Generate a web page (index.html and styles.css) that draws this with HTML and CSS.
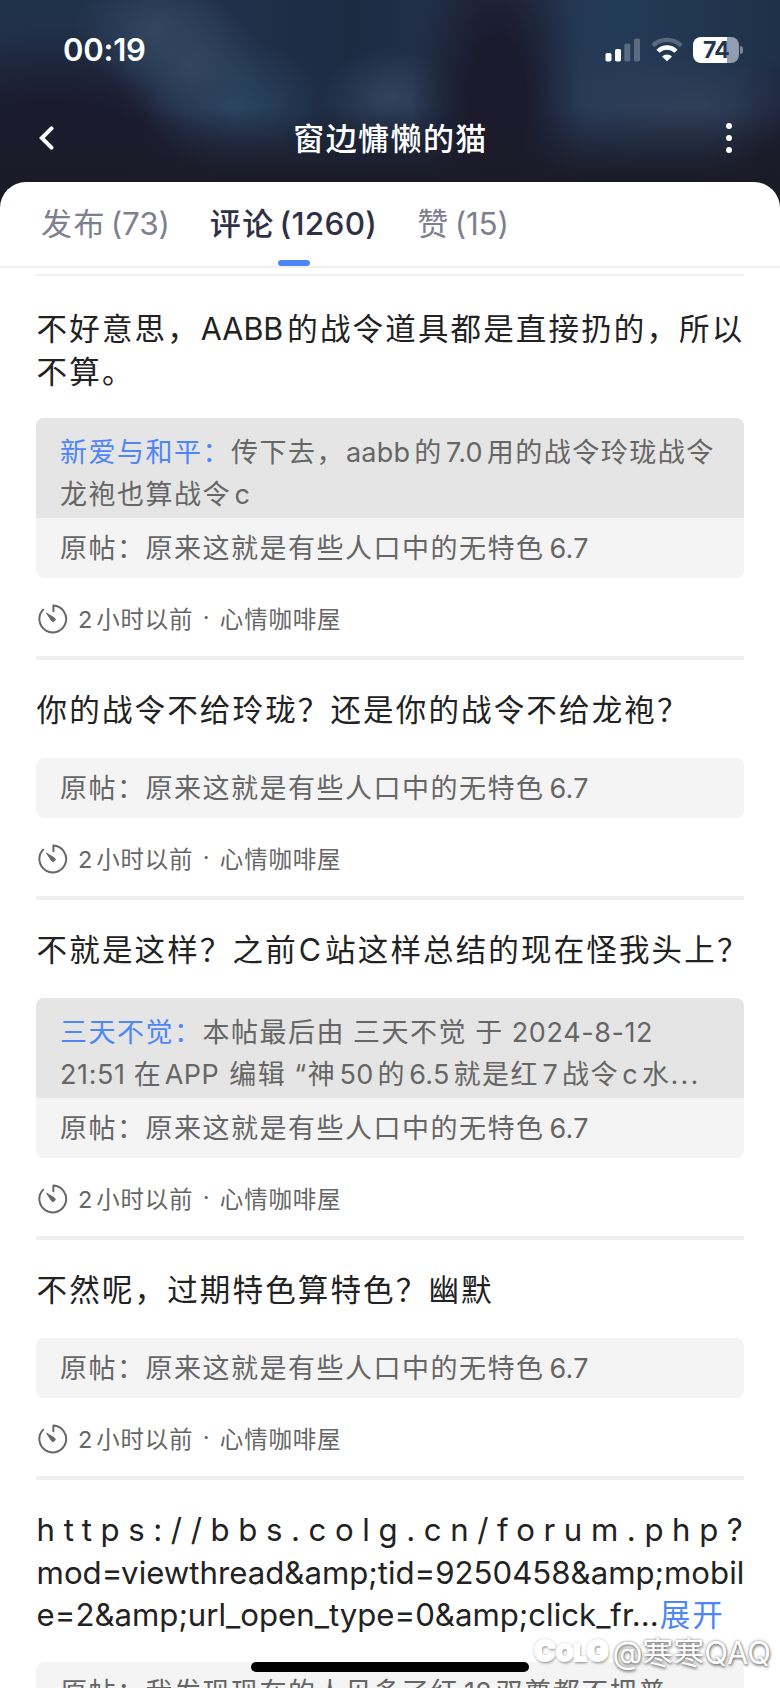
FILE: index.html
```html
<!DOCTYPE html>
<html lang="zh-CN">
<head>
    <meta charset="UTF-8">
    <meta name="viewport" content="width=device-width, initial-scale=1.0">
    <title>窗边慵懒的猫</title>
    <link rel="stylesheet" href="styles.css">
</head>
<body>
    <!-- Shared clock icon -->
    <svg class="defs" width="0" height="0">
        <symbol id="clock" viewBox="0 0 30 30">
            <path d="M15.4 7.2V1.6A13.4 13.4 0 1 1 5.2 5.6" fill="none" stroke="#666" stroke-width="2" stroke-linecap="round" stroke-linejoin="round"/>
            <path d="M8.6 9.2 16.6 14A2 2 0 0 1 13.6 16.8Z" fill="#666" stroke="#666" stroke-width="1" stroke-linejoin="round"/>
        </symbol>
    </svg>

    <header class="header">
        <div class="status-bar">
            <span class="time">00:19</span>
            <div class="status-icons">
                <svg class="signal" width="36" height="26" viewBox="0 0 36 26">
                    <rect x="0.5" y="16" width="6" height="8.5" rx="1.8" fill="#fff"/>
                    <rect x="10" y="12" width="6" height="12.5" rx="1.8" fill="#fff"/>
                    <rect x="19.3" y="6.5" width="6" height="18" rx="1.8" fill="#fff" opacity="0.25"/>
                    <rect x="29" y="1.5" width="6" height="23" rx="1.8" fill="#fff" opacity="0.25"/>
                </svg>
                <svg class="wifi" width="32" height="26" viewBox="0 0 32 26">
                    <path d="M1.8 8.6A20.4 20.4 0 0 1 30.2 8.6" fill="none" stroke="#fff" stroke-width="4.4" opacity="0.25"/>
                    <path d="M7 14.2A12.8 12.8 0 0 1 25 14.2" fill="none" stroke="#fff" stroke-width="4.4"/>
                    <path d="M16 24.3 11 19.4A7.2 7.2 0 0 1 21 19.4Z" fill="#fff"/>
                </svg>
                <div class="battery"><span>74</span></div>
            </div>
        </div>
        <div class="nav-bar">
            <svg class="back" width="16" height="26" viewBox="0 0 16 26">
                <path d="M12.5 3.4 2.8 13 12.5 22.6" fill="none" stroke="#fff" stroke-width="4" stroke-linecap="round" stroke-linejoin="miter"/>
            </svg>
            <h1>窗边慵懒的猫</h1>
            <div class="more"><i></i><i></i><i></i></div>
        </div>
    </header>

    <main class="sheet">
        <nav class="tabs">
            <a class="tab tab-posts">发布<span class="count">(73)</span></a>
            <a class="tab tab-comments active">评论<span class="count">(1260)</span></a>
            <a class="tab tab-likes">赞<span class="count">(15)</span></a>
        </nav>

        <div class="list">
            <article class="post">
                <p class="text two-lines">不好意思，<span class="en">AABB</span>的战令道具都是直接扔的，所以<br>不算。</p>
                <div class="quote">
                    <p class="reply"><b>新爱与和平：</b>传下去，<span class="en after-comma">aabb</span>的<span class="en">7.0</span>用的战令玲珑战令<br>龙袍也算战令<span class="en">c</span></p>
                    <p class="origin">原帖：原来这就是有些人口中的无特色<span class="en">6.7</span></p>
                </div>
                <div class="meta"><svg class="clock"><use href="#clock"/></svg><span><span class="num">2</span>小时以前</span><i>·</i><span>心情咖啡屋</span></div>
            </article>

            <article class="post">
                <p class="text">你的战令不给玲珑？还是你的战令不给龙袍？</p>
                <div class="quote">
                    <p class="origin">原帖：原来这就是有些人口中的无特色<span class="en">6.7</span></p>
                </div>
                <div class="meta"><svg class="clock"><use href="#clock"/></svg><span><span class="num">2</span>小时以前</span><i>·</i><span>心情咖啡屋</span></div>
            </article>

            <article class="post">
                <p class="text">不就是这样？之前<span class="en">C</span>站这样总结的现在怪我头上？</p>
                <div class="quote">
                    <p class="reply"><b>三天不觉：</b>本帖最后由 三天不觉 于 <span class="date">2024-8-12</span><br><span class="date">21:51</span> 在<span class="en app">APP</span> 编辑 “神<span class="en">50</span>的<span class="en">6.5</span>就是红<span class="en">7</span>战令<span class="en">c</span>水<span class="dots">...</span></p>
                    <p class="origin">原帖：原来这就是有些人口中的无特色<span class="en">6.7</span></p>
                </div>
                <div class="meta"><svg class="clock"><use href="#clock"/></svg><span><span class="num">2</span>小时以前</span><i>·</i><span>心情咖啡屋</span></div>
            </article>

            <article class="post">
                <p class="text">不然呢，过期特色算特色？幽默</p>
                <div class="quote">
                    <p class="origin">原帖：原来这就是有些人口中的无特色<span class="en">6.7</span></p>
                </div>
                <div class="meta"><svg class="clock"><use href="#clock"/></svg><span><span class="num">2</span>小时以前</span><i>·</i><span>心情咖啡屋</span></div>
            </article>

            <article class="post">
                <p class="text url"><span class="url-start">https://bbs.colg.cn/forum.php?</span><br>mod=viewthread&amp;amp;tid=9250458&amp;amp;mobil<br>e=2&amp;amp;url_open_type=0&amp;amp;click_fr...<a class="expand">展开</a></p>
                <div class="quote">
                    <p class="origin">原帖：我发现现在的人见多了红<span class="en">12</span>双尊都不把普</p>
                </div>
            </article>
        </div>
    </main>

    <div class="home-indicator"></div>
    <div class="watermark"><span class="brand"><big>C</big>OL<big>G</big></span><span class="user">@寒寒QAQ</span></div>
</body>
</html>
```
FILE: styles.css
```css
* {
    box-sizing: border-box;
    margin: 0;
    padding: 0;
}

body {
    position: relative;
    width: 780px;
    height: 1688px;
    overflow: hidden;
    background: #1b1b29;
    font-family: Inter, "Noto Sans CJK SC", sans-serif;
    color: #222;
}

i {
    font-style: normal;
}

.defs {
    position: absolute;
}

/* Blurred cover behind the status bar and the title */
.header {
    height: 182px;
    margin-bottom: -26px;
    padding-bottom: 26px;
    box-sizing: content-box;
    background:
        linear-gradient(to bottom, rgba(27, 27, 41, 0) 52%, #1b1b28 86%),
        radial-gradient(ellipse 85px 210px at 497px 110px, #1b1b2e 35%, rgba(27, 27, 46, 0) 100%),
        radial-gradient(ellipse 70px 50px at 390px 98px, #32435e, rgba(50, 67, 94, 0)),
        radial-gradient(ellipse 110px 60px at 690px 110px, #323f58, rgba(50, 63, 88, 0)),
        radial-gradient(ellipse 90px 60px at 595px 98px, #293c56, rgba(41, 60, 86, 0)),
        radial-gradient(ellipse 80px 60px at 155px 30px, #33465f, rgba(51, 70, 95, 0)),
        radial-gradient(ellipse 75px 65px at 190px 65px, #31465f, rgba(49, 70, 95, 0)),
        radial-gradient(ellipse 90px 70px at 235px 108px, #2a4562, rgba(42, 69, 98, 0)),
        radial-gradient(ellipse 230px 125px at 50px 150px, #1b1b2f 40%, rgba(27, 27, 47, 0)),
        radial-gradient(ellipse 70px 110px at 780px 165px, #1b1b2f 20%, rgba(27, 27, 47, 0)),
        linear-gradient(to right, #20324a, #20304a 30%, #1d2b41 45%, #23344e 62%, #233a56 80%, #1f3148);
}

.status-bar {
    display: flex;
    justify-content: space-between;
    align-items: center;
    height: 99px;
    padding: 0 37px 0 63px;
}

.time {
    color: #fff;
    font-size: 31px;
    font-weight: 600;
    letter-spacing: -0.2px;
}

.status-icons {
    display: flex;
    align-items: center;
    gap: 10px;
}

.battery {
    display: flex;
    align-items: center;
    width: 50px;
    height: 26px;
}

.battery span {
    width: 46px;
    height: 26px;
    border-radius: 8px;
    background: linear-gradient(to right, #fff 34px, #929daf 34px);
    color: #22364f;
    font-size: 23px;
    font-weight: 700;
    line-height: 26px;
    letter-spacing: -0.8px;
    text-align: center;
}

.battery::after {
    content: "";
    width: 3px;
    height: 8px;
    margin-left: 1px;
    border-radius: 0 3px 3px 0;
    background: #7b8899;
}

.nav-bar {
    display: flex;
    justify-content: space-between;
    align-items: center;
    height: 78px;
    padding: 0 48px 0 39px;
}

.nav-bar h1 {
    padding-bottom: 4px;
    color: #fff;
    font-size: 31px;
    font-weight: 500;
    letter-spacing: 1.4px;
}

.more {
    display: flex;
    flex-direction: column;
    gap: 6px;
}

.more i {
    width: 6px;
    height: 6px;
    border-radius: 50%;
    background: #fff;
}

/* White sheet */
.sheet {
    position: relative;
    height: 1506px;
    border-radius: 26px 26px 0 0;
    background: #fff;
    overflow: hidden;
}

.tabs {
    display: flex;
    align-items: center;
    gap: 40px;
    height: 86px;
    padding-left: 41px;
    border-bottom: 2px solid #f0f0f1;
}

.tab {
    position: relative;
    color: #7e7f90;
    font-size: 31px;
    line-height: 84px;
    letter-spacing: 1.4px;
    white-space: nowrap;
}

.count {
    margin-left: 5px;
    font-size: 31.5px;
    letter-spacing: -0.2px;
}

.tab.active {
    color: #2f3046;
    font-weight: 500;
}

.tab.active .count {
    letter-spacing: 0.3px;
}

/* Underline of the current tab */
.tab.active::after {
    content: "";
    position: absolute;
    left: 50%;
    bottom: 0;
    width: 32px;
    height: 6px;
    margin-left: -16px;
    border-radius: 3px;
    background: #4f86f7;
}

.list {
    margin: 6px 36px 0;
    border-top: 2px solid #f0f0f1;
    padding-top: 2px;
}

.post {
    padding-top: 29px;
    border-bottom: 4px solid #f0f0f1;
}

.text {
    margin-bottom: 26.5px;
    padding-left: 0.6px;
    font-size: 30.5px;
    line-height: 42.5px;
    letter-spacing: 2.15px;
    white-space: nowrap;
}

.text.two-lines {
    margin-bottom: 25px;
    padding-top: 1px;
}

.en {
    margin: 0 4px 0 1px;
    letter-spacing: 0;
}

.quote {
    border-radius: 8px;
    background: #f4f4f4;
    color: #666;
    overflow: hidden;
    font-size: 27px;
    letter-spacing: 1.5px;
    white-space: nowrap;
}

.quote .en {
    margin-left: 3.4px;
    letter-spacing: 0.2px;
}

.quote .app {
    margin-left: 2.5px;
    margin-right: 2px;
    letter-spacing: 0.4px;
}

.quote .after-comma {
    margin-left: 1px;
}

.origin .en {
    margin-left: 5px;
}

.reply {
    height: 100px;
    padding: 14px 24px 0;
    background: #e5e5e5;
    line-height: 42px;
    word-spacing: -1px;
}

.reply b {
    color: #4f86f7;
    font-weight: 400;
}

.date {
    letter-spacing: 0.6px;
}

.dots {
    letter-spacing: 2.2px;
}

.origin {
    height: 60px;
    padding: 1px 0 0 24px;
    line-height: 60px;
}

.meta {
    display: flex;
    align-items: center;
    height: 78px;
    padding: 4px 0 0 2px;
    color: #666;
    font-size: 23.5px;
    letter-spacing: 0.8px;
}

.meta span,
.meta i {
    padding-bottom: 3px;
}

.meta i {
    width: 26.5px;
    text-align: center;
}

.clock {
    width: 30px;
    height: 30px;
    margin-right: 10px;
}

.num {
    margin-right: 3px;
}

.text.url {
    margin-bottom: 25.5px;
    font-size: 31.2px;
    letter-spacing: 0;
}

.url-start {
    letter-spacing: 8.6px;
}

.expand {
    margin-left: 1px;
    color: #4f86f7;
    font-size: 30.5px;
    letter-spacing: 2px;
}

/* Overlays */
.home-indicator {
    position: absolute;
    left: 251px;
    bottom: 16px;
    width: 278px;
    height: 10px;
    border-radius: 5px;
    background: #000;
}

.watermark {
    position: absolute;
    right: 9px;
    bottom: 16px;
    display: flex;
    align-items: center;
    height: 44px;
    color: #fff;
    font-size: 31px;
    white-space: nowrap;
    text-shadow: 0 0 3px rgba(0, 0, 0, 0.5), 1px 2px 3px rgba(0, 0, 0, 0.4);
}

.brand {
    margin-right: 4px;
    font-size: 23px;
    font-weight: 900;
    -webkit-text-stroke: 2px #fff;
}

.brand big {
    font-size: 29px;
}
```
